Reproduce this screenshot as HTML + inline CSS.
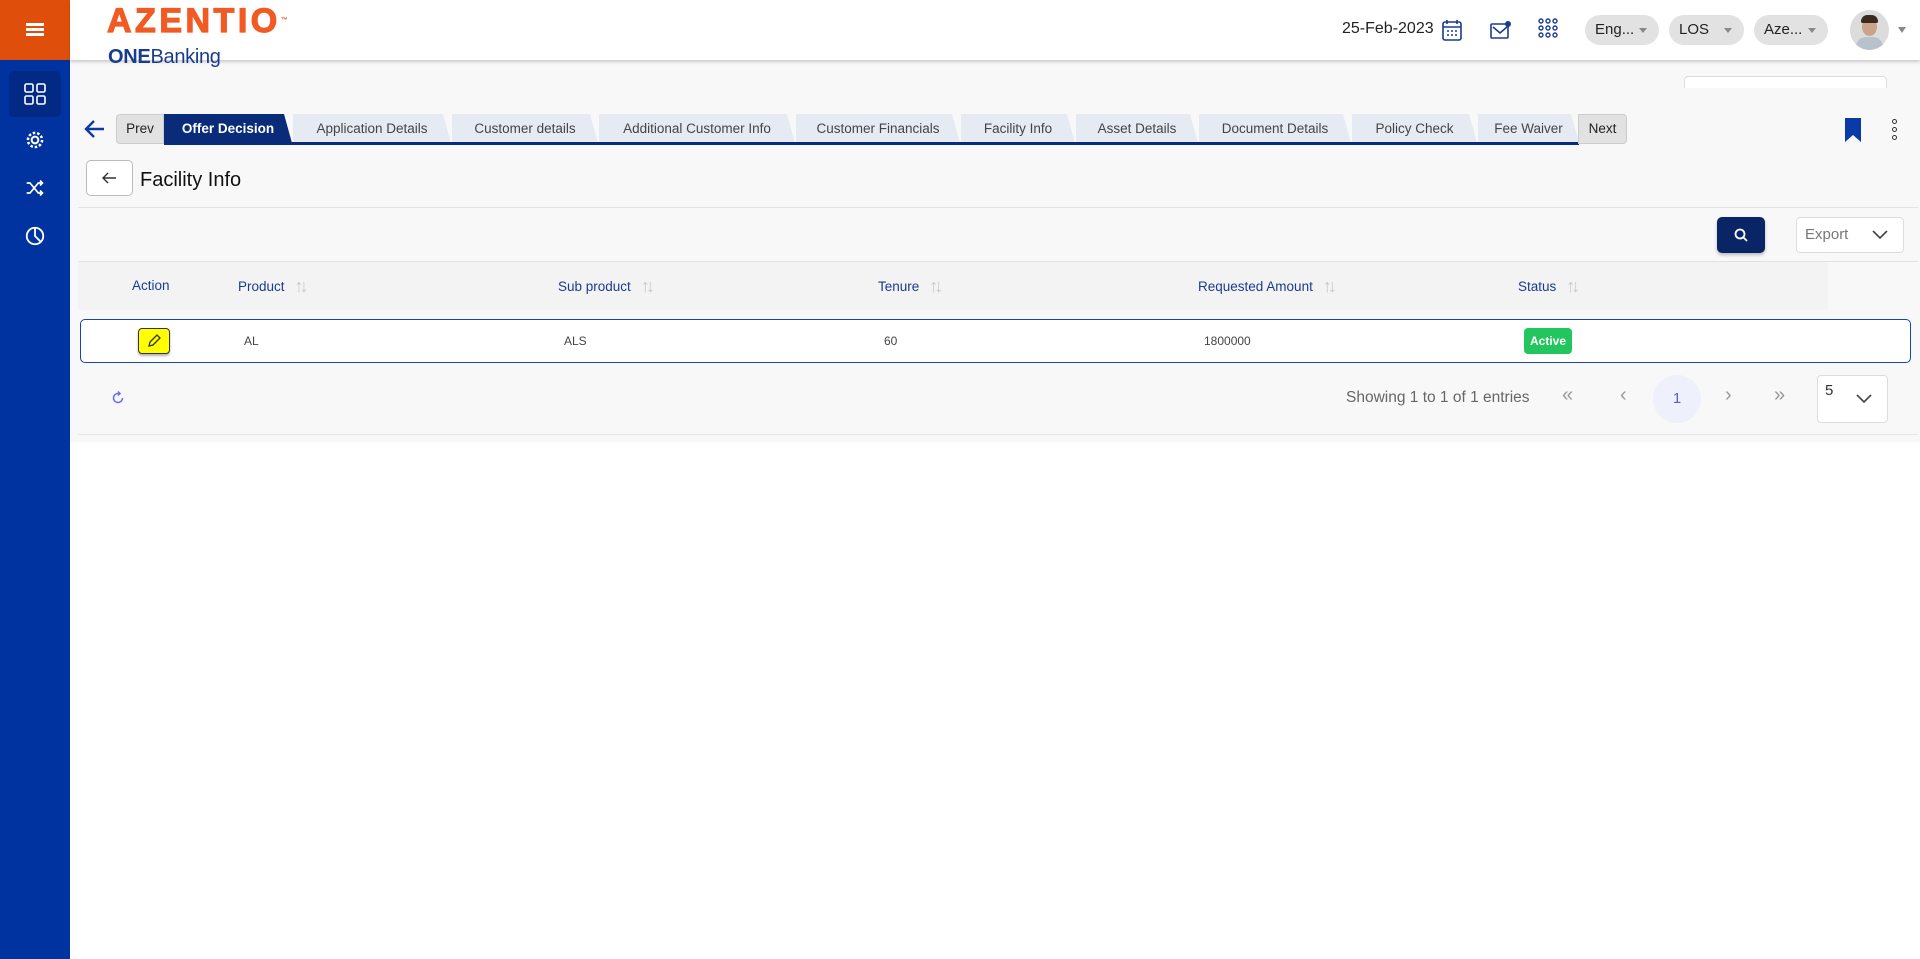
<!DOCTYPE html>
<html><head><meta charset="utf-8"><style>
*{box-sizing:border-box;margin:0;padding:0}
body{width:1920px;height:959px;overflow:hidden;background:#fff;font-family:"Liberation Sans",sans-serif;position:relative;color:#222}
.abs{position:absolute}
.side{left:0;top:0;width:70px;height:959px;background:#0033a0}
.side .top{position:absolute;left:0;top:0;width:70px;height:60px;background:#e04e0b}
.hdr{left:70px;top:0;width:1850px;height:60px;background:#fff;box-shadow:0 2px 3px rgba(0,0,0,.18);z-index:2}
.main{left:70px;top:60px;width:1850px;height:382px;background:#f8f8f8}
.pill{top:15px;height:30px;border-radius:15px;background:#e2e2e2;font-size:15px;line-height:30px;padding-left:10px;color:#222}
.pill:after{content:"";position:absolute;right:12px;top:13px;border:4px solid transparent;border-top:5px solid #888}
.tab{top:114px;height:29px;background:#e6eaf3;font-size:13.5px;line-height:29px;text-align:center;color:#444;clip-path:polygon(0 0,calc(100% - 8px) 0,100% 100%,0 100%)}
.th{top:262px;height:48px;line-height:48px;font-size:13.5px;color:#1a3c8f}
.sort{display:inline-block;margin-left:10px;color:#c8c8c8;font-size:18px;letter-spacing:-4px;vertical-align:-1px}
.td{top:320px;height:42px;line-height:42px;font-size:12px;color:#444}
.pg{top:384px;font-size:20px;color:#999}
</style></head><body>
<div class="abs side"><div class="top"></div></div>
<div class="abs" style="left:26px;top:23px;width:18px;height:2.5px;background:#fff;box-shadow:0 5px 0 #fff,0 10px 0 #fff;z-index:3"></div>
<div class="abs" style="left:9px;top:71px;width:52px;height:46px;background:#022a85;border-radius:5px"></div>
<svg class="abs" style="left:23px;top:82px" width="24" height="24" viewBox="0 0 24 24" fill="none" stroke="#fff" stroke-width="1.6"><rect x="2" y="2" width="8" height="8" rx="1.5"/><rect x="14" y="2" width="8" height="8" rx="1.5"/><rect x="2" y="14" width="8" height="8" rx="1.5"/><rect x="14" y="14" width="8" height="8" rx="1.5"/></svg>
<svg class="abs" style="left:25px;top:130px" width="20" height="20" viewBox="0 0 24 24" fill="none" stroke="#fff" stroke-width="2.4"><circle cx="12" cy="12" r="4"/><circle cx="12" cy="12" r="8.5" stroke-dasharray="3 2.3" stroke-width="3"/></svg>
<svg class="abs" style="left:25px;top:178px" width="20" height="20" viewBox="0 0 24 24" fill="none" stroke="#fff" stroke-width="2"><path d="M2 6h4l10 12h5M2 18h4l10-12h5M18 3l3 3-3 3M18 15l3 3-3 3"/></svg>
<svg class="abs" style="left:24px;top:225px" width="22" height="22" viewBox="0 0 24 24" fill="none" stroke="#fff" stroke-width="2"><circle cx="12" cy="12" r="9"/><path d="M12 3v9l6 6"/></svg>

<div class="abs hdr">
 <div class="abs" style="left:37px;top:1px;font-size:34px;line-height:40px;font-weight:900;color:#f15a22;letter-spacing:3.5px;-webkit-text-stroke:1.2px #f15a22">AZENTIO<span style="font-size:7px;vertical-align:top;letter-spacing:0;-webkit-text-stroke:0">™</span></div>
 <div class="abs" style="left:38px;top:46px;font-size:20px;color:#1a3c8f;letter-spacing:-0.3px"><b>ONE</b>Banking</div>
 <div class="abs" style="left:1272px;top:20px;font-size:16px;color:#222">25-Feb-2023</div>
 <svg class="abs" style="left:1372px;top:19px" width="20" height="22" viewBox="0 0 20 22" fill="none" stroke="#1a3c8f" stroke-width="1.6"><rect x="1" y="3" width="18" height="18" rx="2"/><path d="M1 8h18M5 1v4M15 1v4"/><path d="M5 12h2M9 12h2M13 12h2M5 16h2M9 16h2M13 16h2" stroke-width="1.4"/></svg>
 <svg class="abs" style="left:1420px;top:20px" width="22" height="20" viewBox="0 0 22 20" fill="none" stroke="#1a3c8f" stroke-width="1.6"><rect x="1" y="4" width="17" height="14" rx="1"/><path d="M3 7l7 6 7-6"/><circle cx="18" cy="4" r="3" fill="#1a3c8f" stroke="none"/></svg>
 <svg class="abs" style="left:1468px;top:17px" width="20" height="22" viewBox="0 0 20 22" fill="none" stroke="#1a3c8f" stroke-width="1.4"><g><circle cx="3" cy="4" r="2"/><circle cx="10" cy="4" r="2"/><circle cx="17" cy="4" r="2"/><circle cx="3" cy="11" r="2"/><circle cx="10" cy="11" r="2"/><circle cx="17" cy="11" r="2"/><circle cx="3" cy="18" r="2"/><circle cx="10" cy="18" r="2"/><circle cx="17" cy="18" r="2"/></g></svg>
 <div class="abs pill" style="left:1515px;width:74px">Eng...</div>
 <div class="abs pill" style="left:1599px;width:75px">LOS</div>
 <div class="abs pill" style="left:1684px;width:74px">Aze...</div>
 <div class="abs" style="left:1780px;top:10px;width:39px;height:40px;border-radius:50%;background:#dcdcdc;overflow:hidden">
  <div class="abs" style="left:12px;top:8px;width:15px;height:18px;border-radius:50%;background:#c9a48a"></div>
  <div class="abs" style="left:11px;top:5px;width:17px;height:8px;border-radius:8px 8px 2px 2px;background:#3a2a20"></div>
  <div class="abs" style="left:6px;top:27px;width:27px;height:16px;border-radius:10px 10px 0 0;background:#b8c2cc"></div>
 </div>
 <div class="abs" style="left:1828px;top:27px;border:4px solid transparent;border-top:6px solid #888"></div>
</div>

<div class="abs main"></div>
<div class="abs" style="left:1684px;top:76px;width:203px;height:12px;background:#fff;border:1px solid #ddd;border-bottom:none;border-radius:4px 4px 0 0"></div>
<svg class="abs" style="left:84px;top:119px" width="22" height="20" viewBox="0 0 22 20" fill="none" stroke="#0d3aa0" stroke-width="2.4"><path d="M20 10H3M10 2L2 10l8 8"/></svg>
<div class="abs" style="left:116px;top:114px;width:48px;height:30px;background:#e2e2e2;border:1px solid #ccc;border-radius:4px 0 0 4px;font-size:13.5px;line-height:28px;text-align:center;color:#222">Prev</div>
<div class="abs tab" style="left:164px;width:128px;background:#0a2a7a;color:#fff;font-weight:bold">Offer Decision</div>
<div class="abs tab" style="left:293px;width:158px">Application Details</div>
<div class="abs tab" style="left:452px;width:146px">Customer details</div>
<div class="abs tab" style="left:599px;width:196px">Additional Customer Info</div>
<div class="abs tab" style="left:796px;width:164px">Customer Financials</div>
<div class="abs tab" style="left:961px;width:114px">Facility Info</div>
<div class="abs tab" style="left:1076px;width:122px">Asset Details</div>
<div class="abs tab" style="left:1199px;width:152px">Document Details</div>
<div class="abs tab" style="left:1352px;width:125px">Policy Check</div>
<div class="abs tab" style="left:1478px;width:101px">Fee Waiver</div>
<div class="abs" style="left:164px;top:142px;width:1415px;height:3px;background:#0a2a7a"></div>
<div class="abs" style="left:1578px;top:114px;width:49px;height:30px;background:#e2e2e2;border:1px solid #ccc;border-radius:0 4px 4px 0;font-size:13.5px;line-height:28px;text-align:center;color:#222">Next</div>
<svg class="abs" style="left:1844px;top:117px" width="18" height="26" viewBox="0 0 18 26"><path d="M1 1h16v24l-8-7-8 7z" fill="#0a3aa8"/></svg>
<div class="abs" style="left:1892px;top:119px;width:5px;height:5px;border:1.5px solid #333;border-radius:50%"></div>
<div class="abs" style="left:1892px;top:127px;width:5px;height:5px;border:1.5px solid #333;border-radius:50%"></div>
<div class="abs" style="left:1892px;top:135px;width:5px;height:5px;border:1.5px solid #333;border-radius:50%"></div>

<div class="abs" style="left:86px;top:160px;width:47px;height:36px;background:#fff;border:1px solid #bbb;border-radius:5px"></div>
<svg class="abs" style="left:101px;top:171px" width="16" height="14" viewBox="0 0 16 14" fill="none" stroke="#333" stroke-width="1.4"><path d="M15 7H2M7 2L2 7l5 5"/></svg>
<div class="abs" style="left:140px;top:169px;font-size:20px;color:#111">Facility Info</div>
<div class="abs" style="left:78px;top:207px;width:1840px;height:1px;background:#e2e2e2"></div>

<div class="abs" style="left:1717px;top:217px;width:48px;height:36px;background:#0a2566;border-radius:5px;box-shadow:0 2px 3px rgba(0,0,0,.25)"></div>
<svg class="abs" style="left:1733px;top:227px" width="16" height="16" viewBox="0 0 16 16" fill="none" stroke="#fff" stroke-width="1.8"><circle cx="7" cy="7" r="4.5"/><path d="M10.5 10.5L14 14"/></svg>
<div class="abs" style="left:1796px;top:217px;width:108px;height:36px;background:#fff;border:1px solid #ddd;border-radius:4px;font-size:15px;color:#777;line-height:34px;padding-left:8px">Export</div>
<svg class="abs" style="left:1872px;top:230px" width="16" height="10" viewBox="0 0 16 10" fill="none" stroke="#444" stroke-width="1.6"><path d="M1 1l7 7 7-7"/></svg>

<div class="abs" style="left:78px;top:261px;width:1840px;height:1px;background:#e2e2e2"></div>
<div class="abs" style="left:78px;top:262px;width:1750px;height:48px;background:#f3f3f3"></div>
<div class="abs th" style="left:132px">Action</div>
<div class="abs th" style="left:238px">Product<span class="sort">↑↓</span></div>
<div class="abs th" style="left:558px">Sub product<span class="sort">↑↓</span></div>
<div class="abs th" style="left:878px">Tenure<span class="sort">↑↓</span></div>
<div class="abs th" style="left:1198px">Requested Amount<span class="sort">↑↓</span></div>
<div class="abs th" style="left:1518px">Status<span class="sort">↑↓</span></div>

<div class="abs" style="left:80px;top:319px;width:1831px;height:44px;background:#fff;border:1.5px solid #1646b0;border-radius:5px"></div>
<div class="abs" style="left:138px;top:328px;width:32px;height:26px;background:#ffff00;border:1.5px solid #333;border-radius:4px;box-shadow:0 2px 2px rgba(0,0,0,.3)"></div>
<svg class="abs" style="left:146px;top:333px" width="16" height="16" viewBox="0 0 16 16" fill="none" stroke="#333" stroke-width="1.3"><path d="M3 13l1-4 7-7 3 3-7 7z"/></svg>
<div class="abs td" style="left:244px">AL</div>
<div class="abs td" style="left:564px">ALS</div>
<div class="abs td" style="left:884px">60</div>
<div class="abs td" style="left:1204px">1800000</div>
<div class="abs" style="left:1524px;top:328px;width:48px;height:26px;background:#22c55e;border-radius:4px;color:#fff;font-size:12px;font-weight:bold;text-align:center;line-height:26px">Active</div>

<svg class="abs" style="left:110px;top:390px" width="16" height="16" viewBox="0 0 16 16" fill="none" stroke="#6c6cf0" stroke-width="1.5"><path d="M12.5 8A4.5 4.5 0 1 1 9 3.6"/><path d="M8 1.5l2 2-2 2"/></svg>
<div class="abs" style="left:1346px;top:389px;font-size:15.5px;color:#666">Showing 1 to 1 of 1 entries</div>
<div class="abs pg" style="left:1562px">«</div>
<div class="abs pg" style="left:1620px">‹</div>
<div class="abs" style="left:1653px;top:375px;width:48px;height:48px;border-radius:50%;background:#eef0fb;color:#5b5bd6;font-size:15px;text-align:center;line-height:48px">1</div>
<div class="abs pg" style="left:1725px">›</div>
<div class="abs pg" style="left:1774px">»</div>
<div class="abs" style="left:1817px;top:375px;width:71px;height:48px;background:#fff;border:1px solid #ddd;border-radius:4px;font-size:15px;padding:6px 0 0 7px;color:#333">5</div>
<svg class="abs" style="left:1856px;top:394px" width="16" height="10" viewBox="0 0 16 10" fill="none" stroke="#444" stroke-width="1.6"><path d="M1 1l7 7 7-7"/></svg>
<div class="abs" style="left:78px;top:434px;width:1840px;height:1px;background:#e6e6e6"></div>
</body></html>
